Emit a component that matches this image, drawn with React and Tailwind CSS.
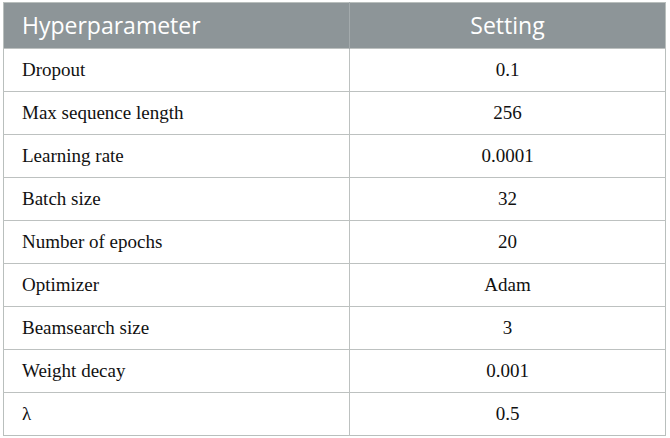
const rows = [
  ["Dropout", "0.1"],
  ["Max sequence length", "256"],
  ["Learning rate", "0.0001"],
  ["Batch size", "32"],
  ["Number of epochs", "20"],
  ["Optimizer", "Adam"],
  ["Beamsearch size", "3"],
  ["Weight decay", "0.001"],
  ["λ", "0.5"],
];

export default function App() {
  return (
    <div className="w-[670px] h-[438px] bg-white pl-[3px] pt-[2px]">
      <table className="w-[663px] border-collapse border border-[#b9bfbd]">
        <thead>
          <tr className="h-[46px] bg-[#8d9598] text-white text-[23px] font-['Open_Sans',sans-serif]">
            <th className="w-[346px] px-[18px] text-left font-normal border-r border-[#a3aaac]">
              Hyperparameter
            </th>
            <th className="text-center font-normal">Setting</th>
          </tr>
        </thead>
        <tbody className="text-[19px] text-[#111] font-['Liberation_Serif',serif]">
          {rows.map(([name, value]) => (
            <tr key={name} className="h-[43px] border-t border-[#bdc1c0]">
              <td className="px-[18px] text-left border-r border-[#bdc1c0]">{name}</td>
              <td className="text-center">{value}</td>
            </tr>
          ))}
        </tbody>
      </table>
    </div>
  );
}
